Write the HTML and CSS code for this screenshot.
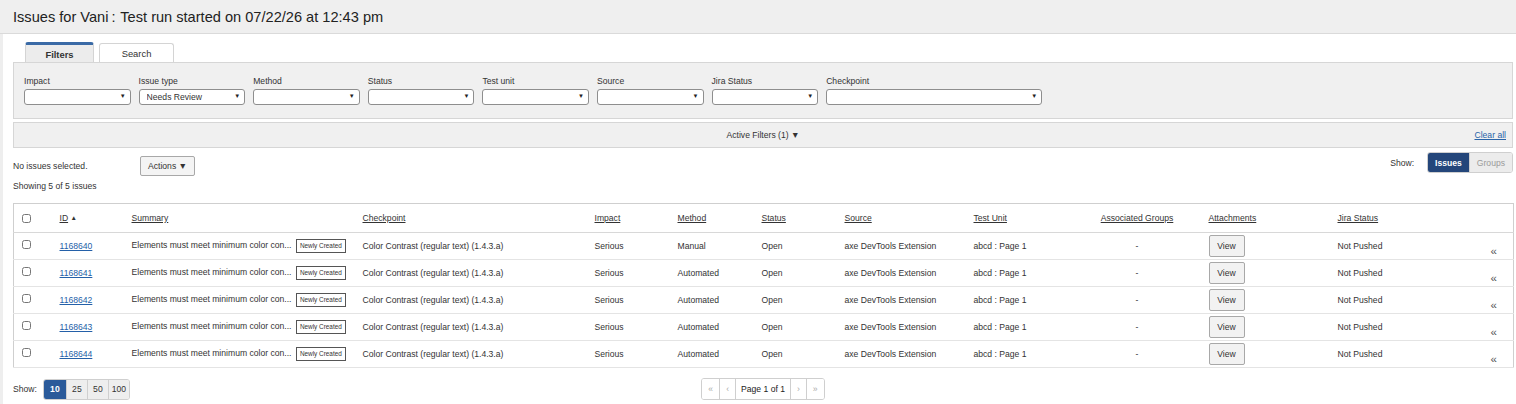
FILE: index.html
```html
<!DOCTYPE html>
<html lang="en">
  <head>
    <meta charset="UTF-8" />
    <title>Issues for Vani</title>
    <link rel="stylesheet" href="styles.css">
  </head>
  <body>
    <header class="page-header">
      <h1>Issues for Vani<span class="sep">:</span> Test run started on 07/22/26 at 12:43 pm</h1>
    </header>

    <main class="content">
      <div class="tabs">
        <button class="tab active">Filters</button>
        <button class="tab">Search</button>
      </div>

      <div class="filter-panel">
        <div class="filter">
          <label for="f-impact">Impact</label>
          <div class="select-wrap"><select id="f-impact"><option></option></select></div>
        </div>
        <div class="filter">
          <label for="f-type">Issue type</label>
          <div class="select-wrap"><select id="f-type"><option>Needs Review</option></select></div>
        </div>
        <div class="filter">
          <label for="f-method">Method</label>
          <div class="select-wrap"><select id="f-method"><option></option></select></div>
        </div>
        <div class="filter">
          <label for="f-status">Status</label>
          <div class="select-wrap"><select id="f-status"><option></option></select></div>
        </div>
        <div class="filter">
          <label for="f-unit">Test unit</label>
          <div class="select-wrap"><select id="f-unit"><option></option></select></div>
        </div>
        <div class="filter">
          <label for="f-source">Source</label>
          <div class="select-wrap"><select id="f-source"><option></option></select></div>
        </div>
        <div class="filter">
          <label for="f-jira">Jira Status</label>
          <div class="select-wrap"><select id="f-jira"><option></option></select></div>
        </div>
        <div class="filter wide">
          <label for="f-check">Checkpoint</label>
          <div class="select-wrap"><select id="f-check"><option></option></select></div>
        </div>
      </div>

      <div class="active-filters">
        <span>Active Filters (1) &#9660;</span>
        <a href="#" class="clear-all">Clear all</a>
      </div>

      <div class="toolbar">
        <div class="selection">
          <span class="selection-text">No issues selected.</span>
          <button class="btn">Actions &#9660;</button>
        </div>
        <div class="view-switch">
          <span>Show:</span>
          <div class="segmented">
            <button class="seg on">Issues</button>
            <button class="seg">Groups</button>
          </div>
        </div>
      </div>
      <div class="count">Showing 5 of 5 issues</div>

      <table class="issues">
        <colgroup>
          <col class="c-chk"><col class="c-id"><col class="c-sum"><col class="c-cp">
          <col class="c-imp"><col class="c-meth"><col class="c-stat"><col class="c-src">
          <col class="c-unit"><col class="c-grp"><col class="c-att"><col class="c-jira"><col class="c-more">
        </colgroup>
        <thead>
          <tr>
            <th><input type="checkbox"></th>
            <th><a>ID</a> <span class="sort">&#9650;</span></th>
            <th><a>Summary</a></th>
            <th><a>Checkpoint</a></th>
            <th><a>Impact</a></th>
            <th><a>Method</a></th>
            <th><a>Status</a></th>
            <th><a>Source</a></th>
            <th><a>Test Unit</a></th>
            <th class="grp"><a>Associated Groups</a></th>
            <th><a>Attachments</a></th>
            <th><a>Jira Status</a></th>
            <th></th>
          </tr>
        </thead>
        <tbody>
          <tr>
            <td><input type="checkbox"></td>
            <td><a href="#" class="id-link">1168640</a></td>
            <td>Elements must meet minimum color con... <span class="badge">Newly Created</span></td>
            <td>Color Contrast (regular text) (1.4.3.a)</td>
            <td>Serious</td>
            <td>Manual</td>
            <td>Open</td>
            <td>axe DevTools Extension</td>
            <td>abcd : Page 1</td>
            <td class="grp">-</td>
            <td><button class="btn view">View</button></td>
            <td>Not Pushed</td>
            <td class="more">&laquo;</td>
          </tr>
          <tr>
            <td><input type="checkbox"></td>
            <td><a href="#" class="id-link">1168641</a></td>
            <td>Elements must meet minimum color con... <span class="badge">Newly Created</span></td>
            <td>Color Contrast (regular text) (1.4.3.a)</td>
            <td>Serious</td>
            <td>Automated</td>
            <td>Open</td>
            <td>axe DevTools Extension</td>
            <td>abcd : Page 1</td>
            <td class="grp">-</td>
            <td><button class="btn view">View</button></td>
            <td>Not Pushed</td>
            <td class="more">&laquo;</td>
          </tr>
          <tr>
            <td><input type="checkbox"></td>
            <td><a href="#" class="id-link">1168642</a></td>
            <td>Elements must meet minimum color con... <span class="badge">Newly Created</span></td>
            <td>Color Contrast (regular text) (1.4.3.a)</td>
            <td>Serious</td>
            <td>Automated</td>
            <td>Open</td>
            <td>axe DevTools Extension</td>
            <td>abcd : Page 1</td>
            <td class="grp">-</td>
            <td><button class="btn view">View</button></td>
            <td>Not Pushed</td>
            <td class="more">&laquo;</td>
          </tr>
          <tr>
            <td><input type="checkbox"></td>
            <td><a href="#" class="id-link">1168643</a></td>
            <td>Elements must meet minimum color con... <span class="badge">Newly Created</span></td>
            <td>Color Contrast (regular text) (1.4.3.a)</td>
            <td>Serious</td>
            <td>Automated</td>
            <td>Open</td>
            <td>axe DevTools Extension</td>
            <td>abcd : Page 1</td>
            <td class="grp">-</td>
            <td><button class="btn view">View</button></td>
            <td>Not Pushed</td>
            <td class="more">&laquo;</td>
          </tr>
          <tr>
            <td><input type="checkbox"></td>
            <td><a href="#" class="id-link">1168644</a></td>
            <td>Elements must meet minimum color con... <span class="badge">Newly Created</span></td>
            <td>Color Contrast (regular text) (1.4.3.a)</td>
            <td>Serious</td>
            <td>Automated</td>
            <td>Open</td>
            <td>axe DevTools Extension</td>
            <td>abcd : Page 1</td>
            <td class="grp">-</td>
            <td><button class="btn view">View</button></td>
            <td>Not Pushed</td>
            <td class="more">&laquo;</td>
          </tr>
        </tbody>
      </table>

      <div class="footer-bar">
        <div class="page-size">
          <span>Show:</span>
          <div class="segmented sizes">
            <button class="seg on">10</button>
            <button class="seg">25</button>
            <button class="seg">50</button>
            <button class="seg">100</button>
          </div>
        </div>
        <div class="pager">
          <button class="pg off">&laquo;</button>
          <button class="pg off">&lsaquo;</button>
          <span class="pg current">Page 1 of 1</span>
          <button class="pg off">&rsaquo;</button>
          <button class="pg off">&raquo;</button>
        </div>
        <div></div>
      </div>
    </main>
  </body>
</html>
```

FILE: styles.css
```css
body {
  font-family: 'Liberation Sans', Arial, sans-serif;
  font-size: 8.6px;
  color: #333;
  margin: 0;
  padding: 0;
  background: #fff;
}

button {
  font-family: inherit;
  font-size: inherit;
  color: inherit;
}

a {
  color: #333;
}

.page-header {
  height: 34px;
  background: #efefef;
  border-bottom: 1px solid #dadada;
  box-sizing: border-box;
  padding-left: 13px;
}

.page-header h1 {
  margin: 0;
  font-size: 14.6px;
  font-weight: normal;
  line-height: 35px;
  color: #222;
}

.page-header .sep {
  margin-left: 3px;
  margin-right: 1px;
}

.content {
  border-left: 3px solid #eeeeee;
  padding: 0 3px 10px 10px;
}

/* tabs */
.tabs {
  display: flex;
  gap: 5px;
  padding: 8px 0 0 12px;
  height: 20px;
  align-items: flex-end;
}

.tab {
  height: 19px;
  padding: 0;
  width: 75px;
  background: #fff;
  border: 1px solid #d4d4d4;
  border-bottom: none;
  border-radius: 3px 3px 0 0;
  font-size: 9.4px;
  color: #333;
}

.tab.active {
  width: 69px;
  height: 20px;
  background: #ececec;
  border-top: 3px solid #3a6aa6;
  font-weight: bold;
  padding-top: 1px;
}

/* filter panel */
.filter-panel {
  display: flex;
  gap: 8px;
  background: #f0f0f0;
  border: 1px solid #d6d6d6;
  padding: 12px 10px 13px;
  height: 57px;
  box-sizing: border-box;
}

.filter {
  width: 106.6px;
}

.filter.wide {
  width: 216px;
}

.filter label {
  display: block;
  line-height: 12px;
  height: 14px;
}

.select-wrap {
  position: relative;
}

.select-wrap::after {
  content: '\25BC';
  position: absolute;
  right: 5px;
  top: 4px;
  font-size: 6px;
  color: #222;
  pointer-events: none;
}

.select-wrap select {
  appearance: none;
  -webkit-appearance: none;
  width: 100%;
  height: 16px;
  border: 1px solid #8e8e8e;
  border-radius: 3px;
  background: #fff;
  font-family: inherit;
  font-size: 8.6px;
  color: #333;
  padding: 0 0 0 7px;
  margin: 0;
}

.active-filters {
  margin-top: 3px;
  height: 26px;
  background: #f0f0f0;
  border: 1px solid #d6d6d6;
  box-sizing: border-box;
  display: flex;
  align-items: center;
  justify-content: center;
  position: relative;
}

.clear-all {
  position: absolute;
  right: 6px;
  top: 7px;
  color: #2a64a8;
}

/* toolbar */
.toolbar {
  display: flex;
  justify-content: space-between;
  align-items: flex-start;
  margin-top: 4px;
}

.selection {
  display: flex;
  align-items: center;
  margin-top: 4px;
}

.selection-text {
  width: 127px;
}

.btn {
  height: 20px;
  background: #f4f4f4;
  border: 1px solid #a8a8a8;
  border-radius: 2px;
  padding: 0 7px;
  color: #333;
}

.view-switch {
  display: flex;
  align-items: center;
  gap: 13px;
}

.segmented {
  display: flex;
  border-radius: 3px;
  overflow: hidden;
  border: 1px solid #cfcfcf;
}

.seg {
  height: 19px;
  border: none;
  border-left: 1px solid #cfcfcf;
  background: #ececec;
  color: #9a9a9a;
  padding: 0 7px;
}

.seg:first-child {
  border-left: none;
}

.seg.on {
  background: #24467a;
  color: #fff;
  font-weight: bold;
}

.count {
  margin-top: 4px;
  line-height: 12px;
}

/* table */
.issues {
  margin-top: 11px;
  width: 1500px;
  table-layout: fixed;
  border-collapse: collapse;
  border: 1px solid #cfcfcf;
}

.c-chk { width: 38px; }
.c-id { width: 72px; }
.c-sum { width: 231px; }
.c-cp { width: 232px; }
.c-imp { width: 83px; }
.c-meth { width: 84px; }
.c-stat { width: 83px; }
.c-src { width: 129px; }
.c-unit { width: 122px; }
.c-grp { width: 113px; }
.c-att { width: 129px; }
.c-jira { width: 151px; }
.c-more { width: 33px; }

.issues th,
.issues td {
  text-align: left;
  font-weight: normal;
  padding: 0 8px;
  white-space: nowrap;
  overflow: hidden;
  line-height: 12px;
  vertical-align: middle;
}

.issues th {
  height: 28px;
  border-bottom: 1px solid #d8d8d8;
}

.issues td {
  height: 26px;
  border-bottom: 1px solid #e4e4e4;
}

.issues th a {
  text-decoration: underline;
  color: #333;
}

.sort {
  font-size: 6.5px;
  vertical-align: 1px;
}

.issues input[type='checkbox'] {
  width: 9px;
  height: 9px;
  margin: 0;
  vertical-align: middle;
}

.issues td input[type='checkbox'] {
  vertical-align: baseline;
}

.issues .grp {
  text-align: center;
  padding: 0 22px 0 8px;
}

.id-link {
  color: #2460a8;
}

.badge {
  display: inline-block;
  font-size: 6.4px;
  line-height: 8px;
  border: 1px solid #555;
  padding: 2px 3px;
  margin-left: 2px;
  color: #333;
  vertical-align: middle;
}

.view {
  display: block;
  height: 22px;
  width: 36px;
  padding: 0;
  background: #f2f2f2;
}

.issues td.more {
  vertical-align: bottom;
  padding: 0 0 0 10px;
  font-size: 11.5px;
  color: #555;
  line-height: 16px;
}

/* footer */
.footer-bar {
  display: grid;
  grid-template-columns: 1fr auto 1fr;
  align-items: center;
  margin-top: 10px;
}

.page-size {
  display: flex;
  align-items: center;
  gap: 6px;
}

.sizes .seg {
  height: 19px;
  padding: 0;
  min-width: 21px;
  color: #333;
  background: #eeeeee;
}

.sizes .seg.on {
  min-width: 22px;
  background: #2a5a9a;
  color: #fff;
}

.pager {
  display: flex;
  border: 1px solid #cfcfcf;
  border-radius: 3px;
  overflow: hidden;
  height: 20px;
}

.pg {
  border: none;
  border-left: 1px solid #cfcfcf;
  background: #fff;
  padding: 0 6px;
  height: 20px;
  display: flex;
  align-items: center;
}

.pg:first-child {
  border-left: none;
}

.pg.off {
  color: #aaa;
}

.pg.current {
  color: #222;
  padding: 0 5px;
}
```
